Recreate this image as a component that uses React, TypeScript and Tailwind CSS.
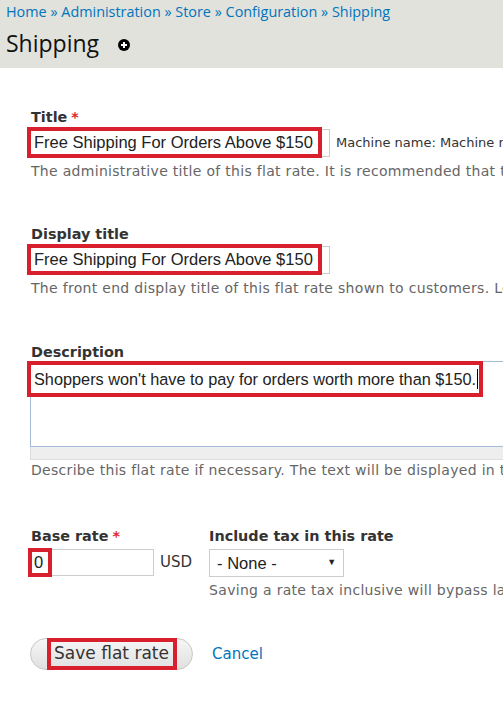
import React from "react";

const RED = "border-[4px] border-[#d8202c]";

function Label({ text, required }: { text: string; required?: boolean }) {
  return (
    <div className="whitespace-nowrap text-[14.4px] font-bold leading-[18px] text-[#333]">
      {text}
      {required && <span className="ml-1 text-[#e0252d]">*</span>}
    </div>
  );
}

function Hint({ children, tight }: { children: React.ReactNode; tight?: boolean }) {
  return (
    <div
      className={`${tight ? "mt-[1px]" : "mt-[4px]"} whitespace-nowrap text-[14px] leading-[18px] tracking-[0.3px] text-[#666]`}
    >
      {children}
    </div>
  );
}

export default function App() {
  return (
    <div className="h-[711px] w-[503px] overflow-hidden bg-white font-['DejaVu_Sans',sans-serif]">
      {/* HEADER */}
      <div className="h-[68px] bg-[#e1e2dc] px-[6px] pt-[2px]">
        <div className="whitespace-nowrap font-['Open_Sans',sans-serif] text-[14.4px] leading-[20px] text-[#0074bd]">
          Home » Administration » Store » Configuration » Shipping
        </div>
        <div className="mt-[6px] flex items-center">
          <h1 className="font-['Open_Sans',sans-serif] text-[23px] leading-[30px] text-[#111]">
            Shipping
          </h1>
          <span className="ml-[19px] mt-[3px] flex h-[12px] w-[12px] items-center justify-center rounded-full bg-black">
            <svg viewBox="0 0 12 12" className="h-[12px] w-[12px]">
              <path d="M6 3v6M3 6h6" stroke="white" strokeWidth="2" />
            </svg>
          </span>
        </div>
      </div>

      {/* FORM */}
      <div className="pl-[31px] pt-[40px]">
        {/* Title */}
        <Label text="Title" required />
        <div className="mt-[1px] flex items-center">
          <div className="ml-[-4px] flex h-[31px] items-center">
            <div className={`${RED} flex h-[31px] w-[295px] items-center whitespace-nowrap bg-white pl-[3px] font-['Liberation_Sans',sans-serif] text-[16.5px] text-[#222]`}>
              Free Shipping For Orders Above $150
            </div>
            <div className="h-[28px] w-[8px] border-y border-r border-[#ccc]" />
          </div>
          <span className="ml-[6px] whitespace-nowrap text-[13px] text-[#333]">
            Machine name: Machine name
          </span>
        </div>
        <Hint>The administrative title of this flat rate. It is recommended that this</Hint>

        {/* Display title */}
        <div className="mt-[45px]">
          <Label text="Display title" />
          <div className="ml-[-4px] mt-[1px] flex h-[31px] items-center">
            <div className={`${RED} flex h-[31px] w-[295px] items-center whitespace-nowrap bg-white pl-[3px] font-['Liberation_Sans',sans-serif] text-[16.5px] text-[#222]`}>
              Free Shipping For Orders Above $150
            </div>
            <div className="h-[28px] w-[8px] border-y border-r border-[#ccc]" />
          </div>
          <Hint>The front end display title of this flat rate shown to customers. Leave</Hint>
        </div>

        {/* Description */}
        <div className="mt-[46px]">
          <Label text="Description" />
          <div className="relative ml-[-1px] mt-[0px]">
            <div className="h-[86px] w-[500px] border border-[#a6bbd8] bg-white" />
            <div className="h-[13px] w-[500px] border-x border-b border-[#ddd] bg-[#eee]" />
            <div className={`${RED} absolute left-[-3px] top-[0px] flex h-[36px] w-[456px] items-center whitespace-nowrap bg-white pl-[3px] font-['Liberation_Sans',sans-serif] text-[16.3px] text-[#222]`}>
              Shoppers won't have to pay for orders worth more than $150.
              <span className="ml-[1px] inline-block h-[20px] w-px bg-black" />
            </div>
          </div>
          <Hint tight>Describe this flat rate if necessary. The text will be displayed in the</Hint>
        </div>

        {/* Base rate + tax */}
        <div className="mt-[48px] flex">
          <div>
            <Label text="Base rate" required />
            <div className="mt-[4px] flex items-center">
              <div className="relative flex h-[27px] w-[123px] items-center border border-[#ccc] bg-white">
                <div className={`${RED} absolute left-[-4px] top-[-2px] flex h-[29px] w-[24px] items-center bg-white pl-[2px] font-['Liberation_Sans',sans-serif] text-[16.5px] text-[#222]`}>
                  0
                </div>
              </div>
              <span className="ml-[6px] text-[15px] text-[#333]">USD</span>
            </div>
          </div>
          <div className="ml-[17px]">
            <Label text="Include tax in this rate" />
            <div className="mt-[4px] flex h-[28px] w-[135px] items-center justify-between border border-[#ccc] bg-white pl-[7px] pr-[7px] font-['Liberation_Sans',sans-serif] text-[16.5px] text-[#222]">
              <span>- None -</span>
              <span className="text-[9px]">▼</span>
            </div>
            <Hint>Saving a rate tax inclusive will bypass later</Hint>
          </div>
        </div>

        {/* Actions */}
        <div className="mt-[39px] flex items-center">
          <div className="relative ml-[-1px] flex h-[32px] w-[163px] items-center justify-center rounded-full border border-[#c8c8c8] bg-gradient-to-b from-[#f6f6f6] to-[#e0e0e0]">
            <div className={`${RED} flex h-[32px] w-[130px] items-center justify-center text-[17px] text-[#333]`}>
              Save flat rate
            </div>
          </div>
          <a className="ml-[19px] text-[15px] text-[#0074bd]">Cancel</a>
        </div>
      </div>
    </div>
  );
}
